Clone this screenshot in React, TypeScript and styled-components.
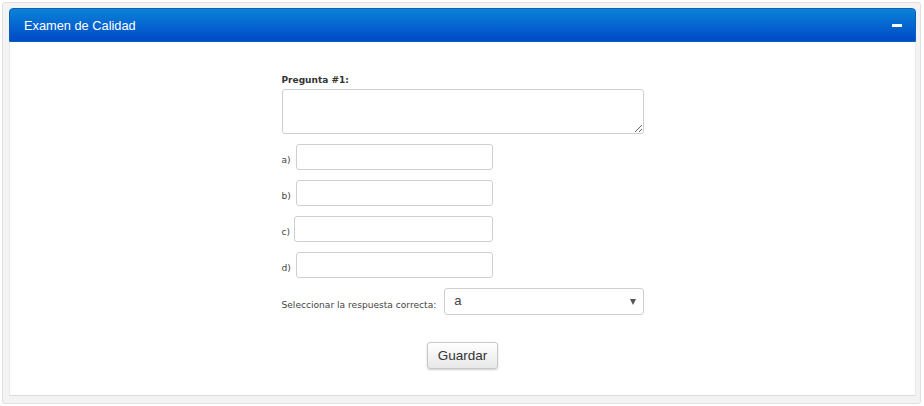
import React from "react";
import styled, { createGlobalStyle } from "styled-components";

const Global = createGlobalStyle`
  html, body { margin: 0; padding: 0; background: #fff; }
  body { font-family: "Liberation Sans", Arial, sans-serif; }
  * { box-sizing: border-box; }
`;

const Page = styled.div`
  width: 924px;
  height: 406px;
  padding: 2px 3px 2px 2px;
`;

const Panel = styled.div`
  height: 100%;
  background: #f3f3f3;
  border: 1px solid #e0e0e0;
  border-radius: 3px;
  padding: 5px 4px 7px 6px;
  display: flex;
  flex-direction: column;
`;

const Header = styled.div`
  height: 34px;
  border-radius: 4px 4px 0 0;
  background: linear-gradient(to bottom, #0a83d6 0%, #0566d0 50%, #0049c6 100%);
  border: 1px solid #0a5fb8;
  display: flex;
  align-items: center;
  justify-content: space-between;
  padding: 0 13px 0 14px;
`;

const Title = styled.span`
  color: #fff;
  font-size: 12.8px;
  font-family: "Liberation Sans", Arial, sans-serif;
`;

const Minus = styled.span`
  width: 10px;
  height: 3px;
  background: #fff;
  display: block;
`;

const Body = styled.div`
  flex: 1;
  background: #fff;
  border-bottom: 1px solid #dcdcdc;
  border-left: 1px solid #eaeaea;
  border-right: 1px solid #eaeaea;
  display: flex;
  justify-content: center;
  padding-top: 31px;
`;

const Form = styled.div`
  width: 362px;
  display: flex;
  flex-direction: column;
`;

const QLabel = styled.div`
  font-family: "DejaVu Sans", Verdana, sans-serif;
  font-weight: bold;
  font-size: 9px;
  color: #333;
  line-height: 14px;
  margin-bottom: 2px;
`;

const TextArea = styled.textarea`
  width: 362px;
  height: 45px;
  border: 1px solid #cfcfcf;
  border-radius: 3px;
  resize: both;
  margin: 0 0 10px 0;
  display: block;
  font-family: inherit;
`;

const Row = styled.div<{ $w?: number }>`
  display: flex;
  align-items: center;
  margin-bottom: 10px;
  width: ${(p) => (p.$w ? `${p.$w}px` : "100%")};
`;

const Small = styled.span<{ $gap?: number }>`
  font-family: "DejaVu Sans", Verdana, sans-serif;
  font-size: 9.1px;
  color: #444;
  margin-right: ${(p) => p.$gap ?? 2}px;
  padding-top: 6px;
  white-space: nowrap;
`;

const Input = styled.input`
  flex: 1;
  min-width: 0;
  height: 26px;
  border: 1px solid #cfcfcf;
  border-radius: 3px;
  outline: none;
`;

const SelectBox = styled.div`
  flex: 1;
  height: 27px;
  border: 1px solid #cfcfcf;
  border-radius: 3px;
  display: flex;
  align-items: center;
  justify-content: space-between;
  padding: 0 7px 2px 9px;
  font-size: 13px;
  color: #444;
`;

const Caret = styled.span`
  width: 0;
  height: 0;
  border-left: 3px solid transparent;
  border-right: 3px solid transparent;
  border-top: 6px solid #555;
  margin-top: 3px;
`;

const ButtonWrap = styled.div`
  display: flex;
  justify-content: center;
  margin-top: 17px;
`;

const Button = styled.button`
  height: 27px;
  padding: 0 10px;
  font-family: "Liberation Sans", Arial, sans-serif;
  font-size: 13.5px;
  color: #333;
  background: linear-gradient(to bottom, #ffffff, #e8e8e8);
  border: 1px solid #c8c8c8;
  border-radius: 3px;
  box-shadow: 0 1px 2px rgba(0, 0, 0, 0.2);
`;

const options = [
  { l: "a)", g: 5 },
  { l: "b)", g: 5 },
  { l: "c)", g: 4 },
  { l: "d)", g: 5 },
];

export default function App() {
  return (
    <>
      <Global />
      <Page>
        <Panel>
          <Header>
            <Title>Examen de Calidad</Title>
            <Minus />
          </Header>
          <Body>
            <Form>
              <QLabel>Pregunta #1:</QLabel>
              <TextArea />
              {options.map((o) => (
                <Row key={o.l} $w={211}>
                  <Small $gap={o.g}>{o.l}</Small>
                  <Input />
                </Row>
              ))}
              <Row>
                <Small $gap={8}>Seleccionar la respuesta correcta:</Small>
                <SelectBox>
                  <span>a</span>
                  <Caret />
                </SelectBox>
              </Row>
              <ButtonWrap>
                <Button>Guardar</Button>
              </ButtonWrap>
            </Form>
          </Body>
        </Panel>
      </Page>
    </>
  );
}
